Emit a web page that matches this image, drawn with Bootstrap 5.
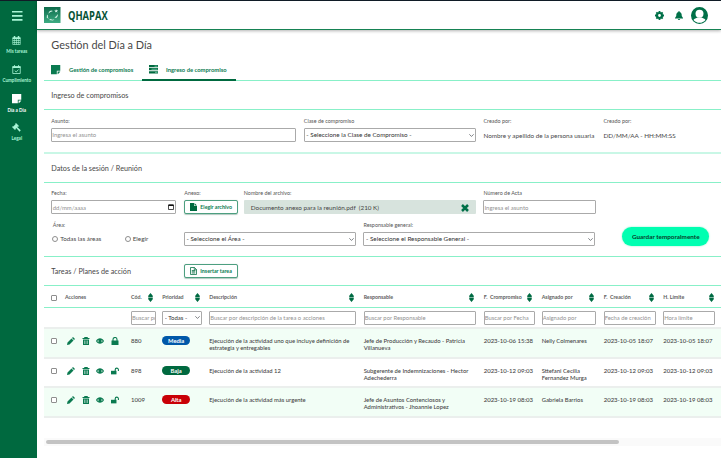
<!DOCTYPE html>
<html lang="es">
<head>
<meta charset="utf-8">
<meta name="viewport" content="width=device-width, initial-scale=1">
<title>QHAPAX - Gestión del Día a Día</title>
<link href="https://cdn.jsdelivr.net/npm/bootstrap@5.3.0/dist/css/bootstrap.min.css" rel="stylesheet">
<style>
:root{--g:#00693f;--g2:#0a7a50;--mint:#88f0c8;--ink:#484848}
body{font:6px/7.3px Lato,"Open Sans",sans-serif;color:var(--ink);background:#fff;height:458px;overflow:hidden;border-top:1px solid #101b26}
svg{display:block;flex:none}
.side{width:37px;height:457px;background:var(--g);color:#a8f5d6;flex:none;padding-top:10px}
.side a{display:block;color:#a8f5d6;text-decoration:none;font-size:4.6px;line-height:6px;font-weight:700;text-align:center;height:29px;white-space:nowrap;padding-right:3.5px}
.side a svg{margin:0 auto 3px}
.side a.on{color:#fff}
.burger{height:25px;padding-left:12px}
.topbar{height:29px;border-bottom:1px solid #168253;box-shadow:0 1px 3px rgba(0,0,0,.3);padding:0 13px 0 7px}
.brand{font:700 13.2px/16px "Open Sans",sans-serif;color:#075236;margin-left:7px;display:inline-block;transform:scaleX(.71);transform-origin:left}
.bell{margin:0 8px 0 11.5px}
.sheet{margin-left:7px}
h1{font-size:10.9px;line-height:14px;font-weight:400;margin:0;padding:8px 0 0 7.3px;height:29px}
.tabrow{height:22px;border-bottom:1px solid var(--mint);color:var(--g2);font-weight:700}
.tabrow a{color:inherit;text-decoration:none;height:22px;flex:none;font-size:5.85px}
.tabrow .t1{width:97.5px;padding-left:7px;gap:8.5px}
.tabrow .t2{width:94.5px;padding-left:7px;gap:8px;border-bottom:2px solid var(--g);padding-top:1px}
.sec{font-size:7.25px;line-height:9px;padding-left:7.3px;border-bottom:1px solid var(--mint);height:29px}
.fields{display:grid;align-content:start;padding-left:7.3px}
.f1{grid-template-columns:252.5px 179.7px 120px 1fr;height:44px;border-bottom:2px solid #c9f7e6;padding-top:7.5px}
.f2{grid-template-columns:133px 59.5px 239.7px 1fr;height:38.5px;padding-top:7px}
.f3{grid-template-columns:132.7px 179.5px 259px 1fr;height:35.5px;border-bottom:1px solid var(--mint)}
.lab{font-size:5.4px;line-height:7px;height:10.3px;color:#555}
.form-control,.form-select{font:inherit;font-size:5.95px;line-height:7px;height:14px;min-height:0;padding:0;border:1px solid #aaa;border-radius:1px;color:#333;background-color:#fff}
.form-control::placeholder{color:#929292;opacity:1}
.form-select{font-size:6.3px;padding:0 8px 0 1.5px;background-size:4.5px 4.5px;background-position:right 1.5px center}
.date{padding-right:1.5px;padding-left:.5px}
.val{height:14px;padding-top:3.8px;font-size:6.35px;white-space:nowrap}
.area{padding-left:1.5px}
.radios{height:14px;padding-left:1px;font-size:6.3px}
.radios span{margin-left:2px;white-space:nowrap}
.radios .second{margin-left:23.5px}
.btn{font:700 5.3px/7px Lato,sans-serif;height:14px;padding:0 4px 0 5px;border:1px solid #4d9f80;border-radius:2px;color:var(--g2);background:#fff;white-space:nowrap}
.btn-outline{width:53.5px;gap:3px;box-shadow:0 .5px 1px rgba(0,80,50,.3)}
.file{height:13.5px;width:232px;background:#d7e3dd;border-radius:1px;padding:1px 7px 0;font-size:6.35px;color:#444}
.save{width:86.5px;height:18.5px;border:0;border-radius:10px;background:#00ffb1;color:#06402a;font-size:6.35px;padding:0;box-shadow:0 0 2px #7eeec7;margin-top:-4.5px}
.save:hover{background:#00ffb1}
.cols{display:grid;grid-template-columns:13.7px 66px 31.2px 47px 154.5px 120px 58px 62px 59.5px 1fr;padding-left:7.3px}
.heads{height:22px;padding-top:2px;border-bottom:1px solid var(--mint);font-weight:700;font-size:5.25px;color:#606060;align-items:center}
.heads>div{display:flex;justify-content:space-between;align-items:center;white-space:nowrap;padding-right:9.5px}
.heads>div:first-child{padding:0}
.heads>div:last-child{padding-right:7.5px}
.filters{height:21px;padding-top:2.5px;border-bottom:2px solid #ebefed}
.filters .form-control{font-size:5.85px}
.filters .form-select{font-size:6px}
.rowx{height:29.5px;border-bottom:2px solid #ebefed;font-size:5.87px;line-height:7.3px;color:#444;font-weight:500;padding-top:8px;white-space:nowrap}
.rowx.odd{background:#f2fef6}
.rowx .num{font-size:6px}
.form-check-input{width:6px;height:6px;min-height:0;margin:0;border:1px solid #8e8e8e;flex:none;float:none;display:block}
.form-check-input[type=checkbox]{border-radius:1px}
.ck{margin-top:1px}
.acts{display:flex;gap:6.6px;color:var(--g2);padding-left:2px}
.pill{display:block;width:28px;height:9px;border-radius:5px;color:#fff;font-weight:700;font-size:5.8px;line-height:9px;text-align:center;margin-top:-1px}
.track{height:8px;margin-top:20px;background:#fafafa;padding:2.5px 0 0 1.5px}
.thumb{width:573.5px;height:3.8px;border-radius:2px;background:#c3c3c3}
</style>
</head>
<body>
<svg width="0" height="0" class="position-absolute">
<symbol id="cal" viewBox="0 0 18 18"><path fill="none" stroke="currentColor" stroke-width="1.300" d="M1.500 5h15v12h-15zM1.500 9h15M1.500 13h15M5.300 5v12M9 5v12M12.700 5v12"/><path fill="currentColor" d="M1 2.500h2.500V0h3v2.500h5V0h3v2.500H17V6H1z"/></symbol>
<symbol id="calok" viewBox="0 0 18 18"><path fill="none" stroke="currentColor" stroke-width="1.600" d="M1.500 3h15v14h-15zM5 0v4M13 0v4M5.500 11.500l3 2.500 4.500-5"/><path fill="currentColor" d="M1 3h16v3H1z"/></symbol>
<symbol id="note" viewBox="0 0 18 18"><path fill="currentColor" d="M0 0h18v11h-7v7H0zM12.500 12.500H18L12.500 18z"/></symbol>
<symbol id="gavel" viewBox="0 0 18 18"><path fill="currentColor" d="M8 0l6 6-1.500 1.500-.8-.5-1.200 1.200 7 6.500-2.300 2.600L8.500 10l-1.300 1.300.6.900L6 14 0 8l1.600-1.600.9.600L7 2.400l-.6-.8z"/></symbol>
<symbol id="sort" viewBox="0 0 10 18"><path fill="#006b43" d="M5 0l4.500 5.500v2.800h-9V5.500zM.5 9.700h9v2.800L5 18 .5 12.500z"/></symbol>
<symbol id="pen" viewBox="0 0 16 16"><path fill="currentColor" d="M0 16l1-5L9 3l4 4-8 8zM10 2l2-2 4 4-2 2z"/></symbol>
<symbol id="bin" viewBox="0 0 14 16"><path fill="currentColor" fill-rule="evenodd" d="M4 0h6l1 2h3v2H0V2h3zM1 5h12v11H1zm3 2v7h1V7zm2.500 0v7h1V7zM9 7v7h1V7z"/></symbol>
<symbol id="eye" viewBox="0 0 18 12"><path fill="currentColor" fill-rule="evenodd" d="M0 6c4-8 14-8 18 0-4 8-14 8-18 0zm3 0c1 1.800 2 2.500 3 3-1.200-2-1.200-4 0-6-1 .5-2 1.200-3 3zm9-3c1.200 2 1.200 4 0 6 1-.5 2-1.200 3-3-1-1.800-2-2.500-3-3z"/></symbol>
<symbol id="lock" viewBox="0 0 14 16"><path fill="currentColor" d="M0 7h14v9H0z"/><path fill="none" stroke="currentColor" stroke-width="2.200" d="M3 8V5a4 4 0 0 1 8 0v3"/></symbol>
<symbol id="unlock" viewBox="0 0 19 16"><path fill="currentColor" d="M0 7.500h13V16H0z"/><path fill="none" stroke="currentColor" stroke-width="2.600" d="M10 9V5a3.800 3.800 0 0 1 7.600 0v3"/></symbol>
</svg>
<div class="d-flex">
<nav class="side">
  <div class="burger"><svg width="10.500" height="10" viewBox="0 0 21 20"><path fill="#a8f5d6" d="M0 0h21v3H0zM0 8h21v3.500H0zM0 16h21v3.500H0z"/></svg></div>
  <a href="#"><svg width="9" height="9"><use href="#cal"/></svg>Mis tareas</a>
  <a href="#"><svg width="9" height="9"><use href="#calok"/></svg>Cumplimiento</a>
  <a href="#" class="on"><svg width="9.500" height="9.500"><use href="#note"/></svg>Día a Día</a>
  <a href="#"><svg width="9" height="9"><use href="#gavel"/></svg>Legal</a>
</nav>
<main class="flex-grow-1">
  <header class="topbar d-flex align-items-center">
    <svg width="16.500" height="16.500" viewBox="0 0 33 33"><defs><linearGradient id="lg" x2="0" y2="1"><stop stop-color="#0d6a4a"/><stop offset="1" stop-color="#3fae84"/></linearGradient></defs><path fill="url(#lg)" d="M0 0h33v33H0z"/><g fill="#d9f4e9"><path d="M24 4l1 2.500 3-.5-2 2.500 1 2.500-3-1.500-2 1.500.500-2.500-2-2 3 .500zM14 7l4 1-6 2.500-3 3 1-4zM6 15l2 2.500-.5 3 2 3-4-2zM10 26l3-2 4 1.500 4-1-3 2.500zM21 21l4-3 2-4 .5 4-3 4z"/></g></svg>
    <span class="brand">QHAPAX</span>
    <div class="d-flex align-items-center ms-auto">
      <svg width="9" height="9" viewBox="-9 -9 18 18"><circle r="5" fill="none" stroke="#007048" stroke-width="4.400"/><path stroke="#007048" stroke-width="3.600" d="M0-9v4M0 9V5M-9 0h4M9 0H5M-6.300-6.300l3 3M6.300 6.300l-3-3M-6.300 6.300l3-3M6.300-6.300l-3 3"/></svg>
      <svg class="bell" width="8" height="9" viewBox="0 0 16 18"><path fill="#007048" d="M7 0h2v2c4 1 4.500 4 4.500 8l2.500 4v1H0v-1l2.500-4C2.500 6 3 3 7 2zM5.500 16h5L9 18H7z"/></svg>
      <svg width="17" height="17" viewBox="0 0 34 34"><circle cx="17" cy="17" r="15.500" fill="#007048" stroke="#007048" stroke-width="3"/><circle cx="17" cy="13.500" r="8" fill="#fff"/><path fill="#fff" d="M5 26c2-3 5-4 8-5h8c3 1 6 2 8 5-6 7.500-18 7.500-24 0z"/></svg>
    </div>
  </header>
  <div class="sheet">
    <h1>Gestión del Día a Día</h1>
    <div class="tabrow d-flex">
      <a href="#" class="t1 d-flex align-items-center"><svg width="9.500" height="9.500"><use href="#note"/></svg><span>Gestión de compromisos</span></a>
      <a href="#" class="t2 d-flex align-items-center"><svg width="9.500" height="8.500" viewBox="0 0 19 17"><path fill="#00693f" d="M0 0h19v4.500H0zM0 6.200h19v4.500H0zM0 12.500h19V17H0z"/><path stroke="#a8f5d6" stroke-width="1.200" d="M11 2.300h6M5 8.400h12M12 14.700h5"/></svg><span>Ingreso de compromiso</span></a>
    </div>
    <div class="sec d-flex align-items-center">Ingreso de compromisos</div>
    <div class="fields f1">
      <div><div class="lab">Asunto:</div><input class="form-control" style="width:245px" placeholder="Ingresa el asunto"></div>
      <div><div class="lab">Clase de compromiso</div><select class="form-select" style="width:172.500px"><option>- Seleccione la Clase de Compromiso -</option></select></div>
      <div><div class="lab">Creado por:</div><div class="val">Nombre y apellido de la persona usuaria</div></div>
      <div><div class="lab">Creado por:</div><div class="val">DD/MM/AA - HH:MM:SS</div></div>
    </div>
    <div class="sec d-flex align-items-center">Datos de la sesión / Reunión</div>
    <div class="fields f2">
      <div><div class="lab">Fecha:</div><div class="form-control date d-flex align-items-center justify-content-between" style="width:125px;color:#929292"><span>dd/mm/aaaa</span><svg width="6" height="6" viewBox="0 0 12 12"><path fill="none" stroke="#111" stroke-width="1.500" d="M1 2h10v9H1z"/><path fill="#111" d="M1 1h10v3H1z"/></svg></div></div>
      <div><div class="lab">Anexo:</div><button class="btn btn-outline d-flex align-items-center"><svg width="7" height="8" viewBox="0 0 14 16"><path fill="#00693f" d="M0 0h8v6h6v10H0zM9 0l5 5H9z"/></svg>Elegir archivo</button></div>
      <div><div class="lab">Nombre del archivo:</div><div class="file d-flex align-items-center justify-content-between"><span>Documento anexo para la reunión.pdf&nbsp; (210 K)</span><svg width="8" height="8" viewBox="0 0 16 16"><path stroke="#007048" stroke-width="5" d="M2 2l12 12M14 2L2 14"/></svg></div></div>
      <div><div class="lab">Número de Acta</div><input class="form-control" style="width:113px" placeholder="Ingresa el asunto"></div>
    </div>
    <div class="fields f3">
      <div><div class="lab area">Área:</div>
        <div class="d-flex align-items-center radios"><input type="radio" class="form-check-input" name="a"><span>Todas las áreas</span><input type="radio" class="form-check-input second" name="a"><span>Elegir</span></div></div>
      <div><div class="lab">&nbsp;</div><select class="form-select" style="width:172px"><option>- Seleccione el Área -</option></select></div>
      <div><div class="lab">Responsable general:</div><select class="form-select" style="width:232px"><option>- Seleccione el Responsable General -</option></select></div>
      <div><div class="lab">&nbsp;</div><button class="btn save">Guardar temporalmente</button></div>
    </div>
    <div class="sec d-flex align-items-center"><span style="width:133px">Tareas / Planes de acción</span><button class="btn btn-outline d-flex align-items-center"><svg width="7" height="8" viewBox="0 0 14 16"><path fill="none" stroke="#00693f" stroke-width="1.500" d="M1 1h8l4 4v10H1zM3.500 7h7M3.500 9.500h7M3.500 12h7M8.500 1v4.500H13"/></svg>Insertar tarea</button></div>
    <div class="cols heads">
      <div><input type="checkbox" class="form-check-input"></div><div>Acciones</div>
      <div><span>Cód.</span><svg width="5" height="9"><use href="#sort"/></svg></div>
      <div><span>Prioridad</span><svg width="5" height="9"><use href="#sort"/></svg></div>
      <div><span>Descripción</span><svg width="5" height="9"><use href="#sort"/></svg></div>
      <div><span>Responsable</span><svg width="5" height="9"><use href="#sort"/></svg></div>
      <div><span>F.&nbsp; Crompromiso</span><svg width="5" height="9"><use href="#sort"/></svg></div>
      <div><span>Asignado por</span><svg width="5" height="9"><use href="#sort"/></svg></div>
      <div><span>F.&nbsp; Creación</span><svg width="5" height="9"><use href="#sort"/></svg></div>
      <div><span>H. Límite</span><svg width="5" height="9"><use href="#sort"/></svg></div>
    </div>
    <div class="cols filters">
      <div></div><div></div>
      <div><input class="form-control" style="width:25.500px" placeholder="Buscar por"></div>
      <div><select class="form-select" style="width:39.500px"><option>- Todas -</option></select></div>
      <div><input class="form-control" style="width:147px" placeholder="Buscar por descripción de la tarea o acciones"></div>
      <div><input class="form-control" style="width:112px" placeholder="Buscar por Responsable"></div>
      <div><input class="form-control" style="width:51px" placeholder="Buscar por Fecha"></div>
      <div><input class="form-control" style="width:54px" placeholder="Asignado por"></div>
      <div><input class="form-control" style="width:52px" placeholder="Fecha de creación"></div>
      <div><input class="form-control" style="width:51.500px" placeholder="Hora límite"></div>
    </div>
    <div class="cols rowx odd">
      <div><input type="checkbox" class="form-check-input ck"></div>
      <div class="acts"><svg width="8" height="8"><use href="#pen"/></svg><svg width="8" height="8"><use href="#bin"/></svg><svg width="8" height="8"><use href="#eye"/></svg><svg width="8" height="8"><use href="#lock"/></svg></div>
      <div class="num">880</div><div><span class="pill" style="background:#0058a9">Media</span></div>
      <div>Ejecución de la actividad uno que incluye definición de<br>estrategia y entregables</div><div>Jefe de Producción y Recaudo - Patricia<br>Villanueva</div>
      <div class="num">2023-10-06 15:38</div><div>Nelly Colmenares</div><div class="num">2023-10-05 18:07</div><div class="num">2023-10-05 18:07</div>
    </div>
    <div class="cols rowx">
      <div><input type="checkbox" class="form-check-input ck"></div>
      <div class="acts"><svg width="8" height="8"><use href="#pen"/></svg><svg width="8" height="8"><use href="#bin"/></svg><svg width="8" height="8"><use href="#eye"/></svg><svg width="8" height="8"><use href="#unlock"/></svg></div>
      <div class="num">898</div><div><span class="pill" style="background:#00693f">Baja</span></div>
      <div>Ejecución de la actividad 12</div><div>Subgerente de Indemnizaciones - Hector<br>Adechederra</div>
      <div class="num">2023-10-12 09:03</div><div>Sttefani Cecilia<br>Fernandez Murga</div><div class="num">2023-10-12 09:03</div><div class="num">2023-10-12 09:03</div>
    </div>
    <div class="cols rowx odd">
      <div><input type="checkbox" class="form-check-input ck"></div>
      <div class="acts"><svg width="8" height="8"><use href="#pen"/></svg><svg width="8" height="8"><use href="#bin"/></svg><svg width="8" height="8"><use href="#eye"/></svg><svg width="8" height="8"><use href="#unlock"/></svg></div>
      <div class="num">1009</div><div><span class="pill" style="background:#c90007">Alta</span></div>
      <div>Ejecución de la actividad más urgente</div><div>Jefe de Asuntos Contenciosos y<br>Administrativos - Jhoannie Lopez</div>
      <div class="num">2023-10-19 08:03</div><div>Gabriela Barrios</div><div class="num">2023-10-19 08:03</div><div class="num">2023-10-19 08:03</div>
    </div>
    <div class="track"><div class="thumb"></div></div>
  </div>
</main>
</div>
<script src="https://cdn.jsdelivr.net/npm/bootstrap@5.3.0/dist/js/bootstrap.bundle.min.js"></script>
</body>
</html>
